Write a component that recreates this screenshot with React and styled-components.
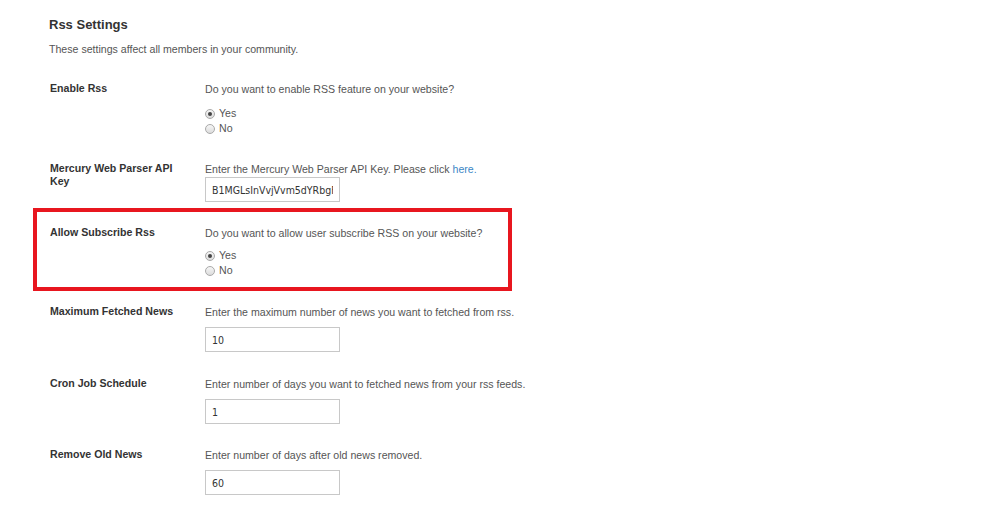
import React from 'react'
import styled, { createGlobalStyle } from 'styled-components'

const GlobalStyle = createGlobalStyle`
  html, body {
    margin: 0;
    padding: 0;
    background: #fff;
  }
  body {
    font-family: "Liberation Sans", Arial, sans-serif;
    color: #333;
  }
`

const Page = styled.div`
  width: 1000px;
  height: 516px;
  overflow: hidden;
  padding-left: 33px;
  box-sizing: border-box;
`

const Title = styled.h2`
  margin: 17px 0 0 16px;
  font-size: 13px;
  line-height: 16px;
  font-weight: 700;
  color: #333;
`

const Intro = styled.p`
  margin: 9px 0 0 16px;
  font-size: 10.6px;
  line-height: 14px;
  color: #555;
`

const Row = styled.div`
  display: grid;
  grid-template-columns: 155px 1fr;
  width: 479px;
  box-sizing: border-box;
  margin-top: ${(p) => p.$top}px;
  padding: ${(p) => (p.$highlight ? '14px 0 9px 13px' : '0 0 0 17px')};
  border: ${(p) => (p.$highlight ? '4px solid #e8161f' : 'none')};
`

const Label = styled.div`
  font-size: 10.6px;
  line-height: 13px;
  font-weight: 700;
  color: #333;
  padding-right: 12px;
`

const Field = styled.div`
  display: flex;
  flex-direction: column;
  align-items: flex-start;
`

const Help = styled.div`
  font-size: 10.6px;
  line-height: 14px;
  color: #555;
  white-space: nowrap;

  a {
    color: #3b87c6;
    text-decoration: none;
  }
`

const Radios = styled.div`
  margin-top: ${(p) => p.$top}px;
  display: flex;
  flex-direction: column;
`

const Option = styled.label`
  display: flex;
  align-items: center;
  gap: 4px;
  font-size: 10.6px;
  line-height: 15px;
  color: #555;
`

const Radio = styled.span`
  width: 10px;
  height: 10px;
  border-radius: 50%;
  border: 1px solid #a9a9a9;
  background: linear-gradient(#f6f6f6, #dcdcdc);
  box-sizing: border-box;
  display: flex;
  align-items: center;
  justify-content: center;

  &::after {
    content: '';
    width: 4px;
    height: 4px;
    border-radius: 50%;
    background: ${(p) => (p.$checked ? '#444' : 'transparent')};
  }
`

const Input = styled.input`
  margin-top: ${(p) => p.$top}px;
  width: 135px;
  height: 25px;
  box-sizing: border-box;
  border: 1px solid #c8c8c8;
  padding: 0 6px;
  font-family: "DejaVu Sans Condensed", "DejaVu Sans", Tahoma, sans-serif;
  font-stretch: condensed;
  font-size: 10.5px;
  color: #333;
  background: #fff;
  outline: none;
`

const YesNo = ({ top }) => (
  <Radios $top={top}>
    <Option>
      <Radio $checked />
      Yes
    </Option>
    <Option>
      <Radio />
      No
    </Option>
  </Radios>
)

const App = () => {
  return (
    <Page>
      <GlobalStyle />
      <Title>Rss Settings</Title>
      <Intro>These settings affect all members in your community.</Intro>

      <Row $top={26}>
        <Label>Enable Rss</Label>
        <Field>
          <Help>Do you want to enable RSS feature on your website?</Help>
          <YesNo top={10} />
        </Field>
      </Row>

      <Row $top={26}>
        <Label>Mercury Web Parser API Key</Label>
        <Field>
          <Help>
            Enter the Mercury Web Parser API Key. Please click <a href="#">here.</a>
          </Help>
          <Input $top={1} defaultValue="B1MGLsInVvjVvm5dYRbgF" />
        </Field>
      </Row>

      <Row $top={6} $highlight>
        <Label>Allow Subscribe Rss</Label>
        <Field>
          <Help>Do you want to allow user subscribe RSS on your website?</Help>
          <YesNo top={8} />
        </Field>
      </Row>

      <Row $top={14}>
        <Label>Maximum Fetched News</Label>
        <Field>
          <Help>Enter the maximum number of news you want to fetched from rss.</Help>
          <Input $top={8} defaultValue="10" />
        </Field>
      </Row>

      <Row $top={25}>
        <Label>Cron Job Schedule</Label>
        <Field>
          <Help>Enter number of days you want to fetched news from your rss feeds.</Help>
          <Input $top={8} defaultValue="1" />
        </Field>
      </Row>

      <Row $top={24}>
        <Label>Remove Old News</Label>
        <Field>
          <Help>Enter number of days after old news removed.</Help>
          <Input $top={8} defaultValue="60" />
        </Field>
      </Row>
    </Page>
  )
}

export default App
